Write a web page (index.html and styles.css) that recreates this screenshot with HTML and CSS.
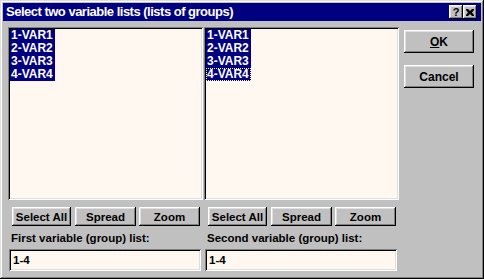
FILE: index.html
```html
<!DOCTYPE html>
<html lang="en">

<head>
    <meta charset="utf-8">
    <title>Select two variable lists</title>
    <link rel="stylesheet" href="styles.css">
</head>

<body>
    <div class="dialog">
        <div class="titlebar">
            <span class="title">Select two variable lists (lists of groups)</span>
            <div class="title-buttons">
                <span class="title-btn">?</span>
                <span class="title-btn">
                    <svg width="8" height="7" viewBox="0 0 8 7">
                        <path d="M0 0h2l2 2 2-2h2v1l-2 2.5 2 2.5v1h-2l-2-2-2 2h-2v-1l2-2.5-2-2.5z" fill="#000"></path>
                    </svg>
                </span>
            </div>
        </div>
        <div class="content">
            <div class="panes">
                <div class="pane">
                    <div class="listbox">
                        <div class="item">1-VAR1</div>
                        <div class="item">2-VAR2</div>
                        <div class="item">3-VAR3</div>
                        <div class="item">4-VAR4</div>
                    </div>
                    <div class="pane-buttons">
                        <button class="btn btn-select">Select All</button>
                        <button class="btn btn-spread">Spread</button>
                        <button class="btn btn-zoom">Zoom</button>
                    </div>
                    <label class="field-label">First variable (group) list:</label>
                    <div class="field">1-4</div>
                </div>
                <div class="pane">
                    <div class="listbox">
                        <div class="item">1-VAR1</div>
                        <div class="item">2-VAR2</div>
                        <div class="item">3-VAR3</div>
                        <div class="item focused">4-VAR4</div>
                    </div>
                    <div class="pane-buttons">
                        <button class="btn btn-select">Select All</button>
                        <button class="btn btn-spread">Spread</button>
                        <button class="btn btn-zoom">Zoom</button>
                    </div>
                    <label class="field-label">Second variable (group) list:</label>
                    <div class="field">1-4</div>
                </div>
            </div>
            <div class="actions">
                <button class="btn btn-action"><u>O</u>K</button>
                <button class="btn btn-action">Cancel</button>
            </div>
        </div>
    </div>
</body>

</html>
```

FILE: styles.css
```css
* {
    margin: 0;
    padding: 0;
    box-sizing: border-box;
}

body {
    background-color: #c0c0c0;
    font-family: "Liberation Sans", Arial, sans-serif;
    font-weight: bold;
    font-size: 11.5px;
    color: #000;
}

.dialog {
    width: 484px;
    height: 279px;
    padding: 3px;
    background-color: #c0c0c0;
    box-shadow: inset -1px -1px #000, inset 1px 1px #dfdfdf, inset -2px -2px #808080, inset 2px 2px #fff;
}

.titlebar {
    height: 18px;
    background-color: #000080;
    display: flex;
    align-items: center;
    justify-content: space-between;
    padding: 0 4px 0 3px;
}

.title {
    color: #fff;
    font-size: 13px;
    letter-spacing: -0.5px;
    line-height: 18px;
}

.title-buttons {
    display: flex;
}

.title-btn {
    width: 14px;
    height: 14px;
    display: flex;
    align-items: center;
    justify-content: center;
    background-color: #c0c0c0;
    font-size: 11px;
    line-height: 14px;
    box-shadow: inset -1px -1px #000, inset 1px 1px #fff, inset -2px -2px #808080, inset 2px 2px #dfdfdf;
}

.content {
    display: flex;
    padding: 6px 0 0 5px;
}

.panes {
    display: flex;
    gap: 1px;
}

.pane {
    width: 195px;
    display: flex;
    flex-direction: column;
}

.listbox {
    height: 173px;
    padding: 2px;
    background-color: #fff8f0;
    box-shadow: inset 1px 1px #808080, inset -1px -1px #fff, inset 2px 2px #000, inset -2px -2px #dfdfdf;
}

.item {
    width: 45px;
    height: 13px;
    line-height: 13px;
    padding-left: 1px;
    font-size: 12px;
    background-color: #000080;
    color: #fff;
}

.item.focused {
    outline: 1px dotted #ffffa0;
    outline-offset: -1px;
}

.pane-buttons {
    display: flex;
    margin-top: 7px;
    padding-left: 4px;
}

.btn {
    height: 19px;
    border: none;
    background-color: #c0c0c0;
    font-family: inherit;
    font-weight: bold;
    font-size: 11.5px;
    color: #000;
    box-shadow: inset -1px -1px #000, inset 1px 1px #fff, inset -2px -2px #808080, inset 2px 2px #dfdfdf;
}

.btn-select {
    width: 59px;
}

.btn-spread {
    width: 61px;
    margin-left: 4px;
}

.btn-zoom {
    width: 61px;
    margin-left: 3px;
}

.field-label {
    display: block;
    margin-top: 6px;
    padding-left: 3px;
    height: 13px;
    line-height: 13px;
}

.field {
    width: 192px;
    height: 22px;
    margin: 4px 0 0 1px;
    padding: 0 4px;
    line-height: 22px;
    background-color: #fff8f0;
    box-shadow: inset 1px 1px #808080, inset -1px -1px #fff, inset 2px 2px #000, inset -2px -2px #dfdfdf;
}

.actions {
    display: flex;
    flex-direction: column;
    gap: 12px;
    margin: 3px 0 0 5px;
}

.btn-action {
    width: 70px;
    height: 23px;
    font-size: 12px;
}
```
